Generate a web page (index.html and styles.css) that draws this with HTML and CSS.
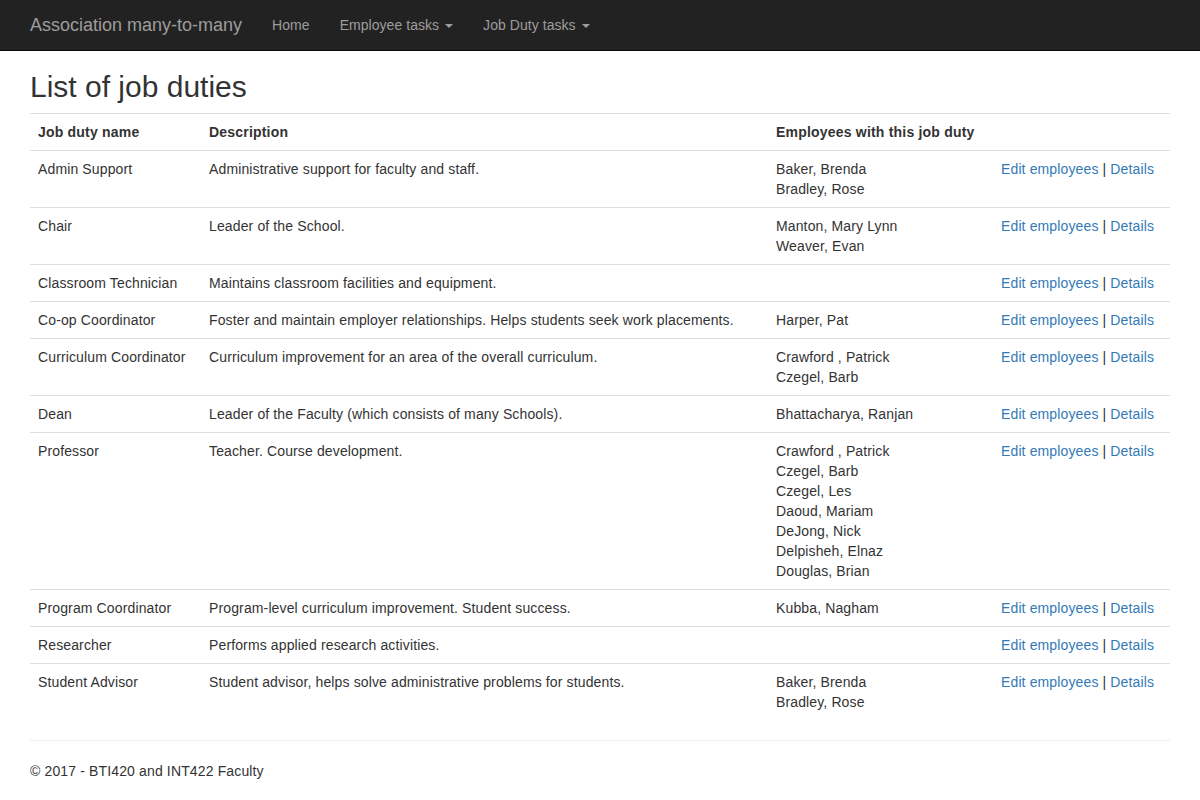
FILE: index.html
```html
<!DOCTYPE html>
<html>
<head>
<meta charset="utf-8">
<title>List of job duties</title>
<link rel="stylesheet" href="styles.css">
</head>
<body>
<div class="navbar">
  <div class="nav-container">
    <a class="brand" href="#">Association many-to-many</a>
    <ul class="nav">
      <li><a href="#">Home</a></li>
      <li><a href="#">Employee tasks <span class="caret"></span></a></li>
      <li><a href="#">Job Duty tasks <span class="caret"></span></a></li>
    </ul>
  </div>
</div>
<div class="container">
  <h2 class="title">List of job duties</h2>
  <table class="table">
    <colgroup>
      <col class="c1"><col class="c2"><col class="c3"><col class="c4">
    </colgroup>
    <tr>
      <th>Job duty name</th>
      <th>Description</th>
      <th>Employees with this job duty</th>
      <th></th>
    </tr>
    <tr>
      <td>Admin Support</td>
      <td>Administrative support for faculty and staff.</td>
      <td>Baker, Brenda<br>Bradley, Rose</td>
      <td><a href="#">Edit employees</a> | <a href="#">Details</a></td>
    </tr>
    <tr>
      <td>Chair</td>
      <td>Leader of the School.</td>
      <td>Manton, Mary Lynn<br>Weaver, Evan</td>
      <td><a href="#">Edit employees</a> | <a href="#">Details</a></td>
    </tr>
    <tr>
      <td>Classroom Technician</td>
      <td>Maintains classroom facilities and equipment.</td>
      <td></td>
      <td><a href="#">Edit employees</a> | <a href="#">Details</a></td>
    </tr>
    <tr>
      <td>Co-op Coordinator</td>
      <td>Foster and maintain employer relationships. Helps students seek work placements.</td>
      <td>Harper, Pat</td>
      <td><a href="#">Edit employees</a> | <a href="#">Details</a></td>
    </tr>
    <tr>
      <td>Curriculum Coordinator</td>
      <td>Curriculum improvement for an area of the overall curriculum.</td>
      <td>Crawford , Patrick<br>Czegel, Barb</td>
      <td><a href="#">Edit employees</a> | <a href="#">Details</a></td>
    </tr>
    <tr>
      <td>Dean</td>
      <td>Leader of the Faculty (which consists of many Schools).</td>
      <td>Bhattacharya, Ranjan</td>
      <td><a href="#">Edit employees</a> | <a href="#">Details</a></td>
    </tr>
    <tr>
      <td>Professor</td>
      <td>Teacher. Course development.</td>
      <td>Crawford , Patrick<br>Czegel, Barb<br>Czegel, Les<br>Daoud, Mariam<br>DeJong, Nick<br>Delpisheh, Elnaz<br>Douglas, Brian</td>
      <td><a href="#">Edit employees</a> | <a href="#">Details</a></td>
    </tr>
    <tr>
      <td>Program Coordinator</td>
      <td>Program-level curriculum improvement. Student success.</td>
      <td>Kubba, Nagham</td>
      <td><a href="#">Edit employees</a> | <a href="#">Details</a></td>
    </tr>
    <tr>
      <td>Researcher</td>
      <td>Performs applied research activities.</td>
      <td></td>
      <td><a href="#">Edit employees</a> | <a href="#">Details</a></td>
    </tr>
    <tr>
      <td>Student Advisor</td>
      <td>Student advisor, helps solve administrative problems for students.</td>
      <td>Baker, Brenda<br>Bradley, Rose</td>
      <td><a href="#">Edit employees</a> | <a href="#">Details</a></td>
    </tr>
  </table>
  <hr class="rule">
  <footer class="footer">
    <p>&copy; 2017 - BTI420 and INT422 Faculty</p>
  </footer>
</div>
</body>
</html>
```

FILE: styles.css
```css
* { box-sizing: border-box; }
html, body {
  margin: 0;
  padding: 0;
}
body {
  font-family: "Liberation Sans", Arial, Helvetica, sans-serif;
  font-size: 14px;
  line-height: 20px;
  color: #333;
  background: #fff;
  padding-top: 50px;
}
a { color: #337ab7; text-decoration: none; }

.navbar {
  position: fixed;
  top: 0;
  left: 0;
  right: 0;
  height: 51px;
  background: #222;
  border-bottom: 1px solid #080808;
  z-index: 10;
}
.nav-container {
  width: 1170px;
  margin: 0 auto;
  padding: 0 15px;
  display: flex;
  align-items: flex-start;
}
.brand {
  display: block;
  height: 50px;
  padding: 15px;
  margin-left: -15px;
  font-size: 18px;
  line-height: 20px;
  color: #9d9d9d;
}
.nav {
  list-style: none;
  margin: 0;
  padding: 0;
  display: flex;
}
.nav a {
  display: block;
  padding: 15px;
  line-height: 20px;
  color: #9d9d9d;
  letter-spacing: 0.05px;
}
.caret {
  display: inline-block;
  width: 0;
  height: 0;
  margin-left: 2px;
  vertical-align: middle;
  border-top: 4px solid;
  border-right: 4px solid transparent;
  border-left: 4px solid transparent;
}

.container {
  width: 1170px;
  margin: 0 auto;
  padding: 0 15px;
}
.title {
  margin: 20px 0 10px;
  font-size: 30px;
  font-weight: 500;
  line-height: 33px;
  color: #333;
}
.table {
  width: 100%;
  border-collapse: collapse;
  border-spacing: 0;
  margin-bottom: 20px;
  table-layout: fixed;
  letter-spacing: 0.13px;
}
.c1 { width: 171px; }
.c2 { width: 567px; }
.c3 { width: 225px; }
.c4 { width: 177px; }
.table th, .table td {
  padding: 8px;
  line-height: 20px;
  vertical-align: top;
  border-top: 1px solid #ddd;
  text-align: left;
}
.table th { font-weight: bold; letter-spacing: 0.2px; }
.rule {
  margin: 20px 0;
  border: 0;
  border-top: 1px solid #eee;
  height: 0;
}
.footer p {
  margin: 0 0 10px;
  letter-spacing: 0.14px;
}
```
